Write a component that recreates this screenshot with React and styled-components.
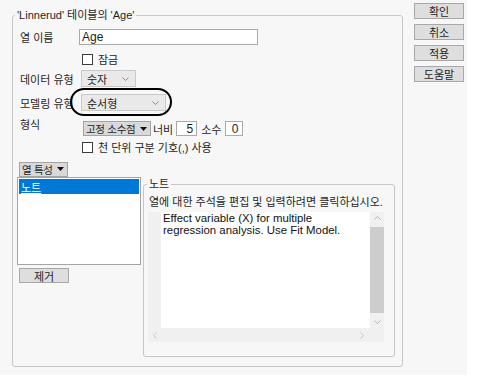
import React from 'react';
import styled, { createGlobalStyle } from 'styled-components';

const GlobalStyle = createGlobalStyle`
  body {
    margin: 0;
    background: #ffffff;
    font-family: "Liberation Sans", "Noto Sans CJK KR", sans-serif;
    font-size: 11px;
    color: #1e1e1e;
  }
`;

const Window = styled.div`
  width: 467px;
  height: 375px;
  box-sizing: border-box;
  padding: 3px 0 0 12px;
  background: #f7f7f7;
  display: flex;
  align-items: flex-start;
`;

const GroupBox = styled.fieldset`
  box-sizing: border-box;
  margin: ${(p) => p.m || 0};
  width: ${(p) => p.w}px;
  height: ${(p) => p.h}px;
  min-inline-size: 0;
  padding: ${(p) => p.pad};
  border: 1px solid #c6c6c6;
  border-radius: 3px;
  display: flex;
  flex-direction: column;
`;

const Legend = styled.legend`
  margin-left: ${(p) => p.ml}px;
  padding: 0 2px;
  height: 14px;
  line-height: 14px;
  font-size: 11px;
  color: #1e1e1e;
`;

const FormRow = styled.div`
  position: relative;
  display: flex;
  align-items: center;
  height: ${(p) => p.h}px;
  margin-top: ${(p) => p.mt || 0}px;
  padding-left: ${(p) => p.pl || 0}px;
`;

const Label = styled.span`
  flex: none;
  width: 60px;
  white-space: nowrap;
  align-self: ${(p) => (p.top ? 'flex-start' : 'center')};
  line-height: ${(p) => (p.top ? '9px' : 'normal')};
`;

const TextField = styled.div`
  box-sizing: border-box;
  width: ${(p) => p.w}px;
  height: ${(p) => p.h || 16}px;
  margin-left: ${(p) => p.ml || 0}px;
  padding: 0 ${(p) => (p.right ? '3px' : '0')} 0 2px;
  background: #ffffff;
  border: 1px solid #a9a9a9;
  display: flex;
  align-items: center;
  justify-content: ${(p) => (p.right ? 'flex-end' : 'flex-start')};
  font-size: 12px;
`;

const CheckBox = styled.span`
  box-sizing: border-box;
  flex: none;
  width: 11px;
  height: 11px;
  background: #ffffff;
  border: 1px solid #3c3c3c;
  margin-right: 5px;
`;

const Select = styled.div`
  box-sizing: border-box;
  width: ${(p) => p.w}px;
  height: 17px;
  margin-left: 1px;
  padding: 0 6px 0 5px;
  background: #e9e9e9;
  border: 1px solid #c9c9c9;
  display: flex;
  align-items: center;
  justify-content: space-between;
`;

const Annotation = styled.div`
  position: absolute;
  left: 50px;
  top: -6px;
  width: 102px;
  height: 28px;
  box-sizing: border-box;
  border: 2px solid #000000;
  border-radius: 14px / 14px;
  pointer-events: none;
`;

const MenuButton = styled.div`
  box-sizing: border-box;
  width: ${(p) => p.w}px;
  height: ${(p) => p.h}px;
  margin-left: ${(p) => p.ml || 0}px;
  padding: 0 3px 0 2px;
  background: #d9d9d9;
  border: 1px solid #a4a4a4;
  display: flex;
  align-items: center;
  justify-content: space-between;
  white-space: nowrap;
  font-size: 10.5px;
  letter-spacing: -0.3px;
`;

const Caption = styled.span`
  margin-left: ${(p) => p.ml || 0}px;
  margin-right: ${(p) => p.mr || 0}px;
  white-space: nowrap;
`;

const BottomSection = styled.div`
  display: flex;
  align-items: flex-start;
  margin: 1px 0 0 -3px;
`;

const LeftColumn = styled.div`
  width: 124px;
  display: flex;
  flex-direction: column;
`;

const ListBox = styled.div`
  box-sizing: border-box;
  height: 88px;
  padding: 1px;
  background: #ffffff;
  border: 1px solid #a4a4a4;
`;

const ListItem = styled.div`
  height: 15px;
  padding-left: 2px;
  display: flex;
  align-items: center;
  background: ${(p) => (p.selected ? '#0078d7' : 'transparent')};
  color: ${(p) => (p.selected ? '#ffffff' : '#1e1e1e')};
  text-decoration: ${(p) => (p.selected ? 'underline' : 'none')};
`;

const PlainButton = styled.div`
  box-sizing: border-box;
  width: 50px;
  height: ${(p) => p.h || 16}px;
  margin: ${(p) => p.m || 0};
  background: #dedede;
  border: 1px solid #a8a8a8;
  display: flex;
  align-items: center;
  justify-content: center;
  font-size: 11px;
`;

const HelpText = styled.div`
  height: 14px;
  line-height: 14px;
  padding-left: 1px;
  white-space: nowrap;
`;

const NoteBox = styled.div`
  margin-top: 3px;
  width: 236px;
  height: 130px;
  display: grid;
  grid-template-columns: 13px 209px 14px;
  grid-template-rows: 116px 14px;
  background: #f0f0f0;
`;

const NoteText = styled.div`
  grid-column: 2;
  background: #ffffff;
  padding: 0 2px;
  font-family: "Liberation Sans", Arial, sans-serif;
  font-size: 11.4px;
  line-height: 12px;
  color: #111;
`;

const VScroll = styled.div`
  grid-column: 3;
  display: flex;
  flex-direction: column;
  align-items: center;
`;

const Thumb = styled.div`
  width: 100%;
  height: 86px;
  margin: 3px 0 4px;
  background: #cdcdcd;
`;

const HScroll = styled.div`
  grid-column: 1 / 3;
  display: flex;
  align-items: center;
  justify-content: space-between;
  padding: 0 6px 0 5px;
`;

const ArrowCell = styled.div`
  height: ${(p) => p.h}px;
  display: flex;
  align-items: center;
  justify-content: center;
`;

const ButtonColumn = styled.div`
  margin-left: 11px;
  display: flex;
  flex-direction: column;
  gap: 5px;
`;

const Chevron = ({ dir = 'down', color = '#8a8a8a' }) => {
  const pts = {
    down: '0.5,0.5 3.5,3.5 6.5,0.5',
    up: '0.5,3.5 3.5,0.5 6.5,3.5',
    left: '3.5,0.5 0.5,3.5 3.5,6.5',
    right: '0.5,0.5 3.5,3.5 0.5,6.5',
  }[dir];
  const vertical = dir === 'up' || dir === 'down';
  return (
    <svg width={vertical ? 7 : 4} height={vertical ? 4 : 7}>
      <polyline points={pts} fill="none" stroke={color} strokeWidth="1" />
    </svg>
  );
};

const DropTriangle = () => (
  <svg width="7" height="4">
    <polygon points="0,0 7,0 3.5,4" fill="#111" />
  </svg>
);

export default function App() {
  return (
    <>
      <GlobalStyle />
      <Window>
        <GroupBox w={391} h={359} m="5px 0 0 0" pad="7px 7px 0 7px">
          <Legend ml={-5}>'Linnerud' 테이블의 'Age'</Legend>

          <FormRow h={16}>
            <Label>열 이름</Label>
            <TextField w={179} ml={-1}>Age</TextField>
          </FormRow>

          <FormRow h={12} mt={8} pl={62}>
            <CheckBox />
            <Caption>잠금</Caption>
          </FormRow>

          <FormRow h={17} mt={5}>
            <Label>데이터 유형</Label>
            <Select w={55}>
              숫자
              <Chevron />
            </Select>
          </FormRow>

          <FormRow h={17} mt={7}>
            <Label>모델링 유형</Label>
            <Select w={85}>
              순서형
              <Chevron />
            </Select>
            <Annotation />
          </FormRow>

          <FormRow h={15} mt={10}>
            <Label top>형식</Label>
            <MenuButton w={68} h={15} ml={3}>
              고정 소수점
              <DropTriangle />
            </MenuButton>
            <Caption ml={2} mr={3}>너비</Caption>
            <TextField w={21} h={15} right>5</TextField>
            <Caption ml={4} mr={3}>소수</Caption>
            <TextField w={18} h={15} right>0</TextField>
          </FormRow>

          <FormRow h={12} mt={5} pl={62}>
            <CheckBox />
            <Caption>천 단위 구분 기호(,) 사용</Caption>
          </FormRow>

          <FormRow h={14} mt={9}>
            <MenuButton w={49} h={15} ml={-1}>
              열 특성
              <DropTriangle />
            </MenuButton>
          </FormRow>

          <BottomSection>
            <LeftColumn>
              <ListBox>
                <ListItem selected>노트</ListItem>
              </ListBox>
              <PlainButton h={15} m="3px 0 0 2px">제거</PlainButton>
            </LeftColumn>

            <GroupBox w={252} h={180} m="0 0 0 2px" pad="4px 10px 0 4px">
              <Legend ml={-1}>노트</Legend>
              <HelpText>열에 대한 주석을 편집 및 입력하려면 클릭하십시오.</HelpText>
              <NoteBox>
                <div />
                <NoteText>
                  Effect variable (X) for multiple
                  <br />
                  regression analysis. Use Fit Model.
                </NoteText>
                <VScroll>
                  <ArrowCell h={12}>
                    <Chevron dir="up" color="#b4b4b4" />
                  </ArrowCell>
                  <Thumb />
                  <ArrowCell h={10}>
                    <Chevron dir="down" color="#b4b4b4" />
                  </ArrowCell>
                </VScroll>
                <HScroll>
                  <Chevron dir="left" color="#c4c4c4" />
                  <Chevron dir="right" color="#c4c4c4" />
                </HScroll>
                <div />
              </NoteBox>
            </GroupBox>
          </BottomSection>
        </GroupBox>

        <ButtonColumn>
          <PlainButton>확인</PlainButton>
          <PlainButton>취소</PlainButton>
          <PlainButton>적용</PlainButton>
          <PlainButton>도움말</PlainButton>
        </ButtonColumn>
      </Window>
    </>
  );
}
